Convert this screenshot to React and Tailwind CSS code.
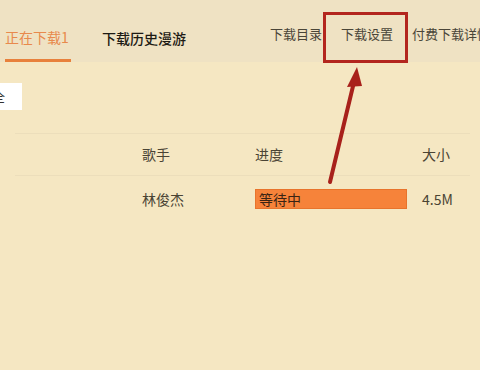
import React from "react";

const font = { fontFamily: '"Noto Sans CJK SC", "Liberation Sans", sans-serif' };

function Annotation() {
  return (
    <>
      <div className="absolute left-[323px] top-[12px] w-[85px] h-[51px] border-[3px] border-[#b3261e]" />
      <svg className="absolute left-0 top-0" width="480" height="370" viewBox="0 0 480 370">
        <line x1="330" y1="182" x2="354" y2="82" stroke="#a8211b" strokeWidth="4" strokeLinecap="round" />
        <polygon points="357,67 347,87 362,86" fill="#a8211b" />
      </svg>
    </>
  );
}

export default function App() {
  return (
    <div className="relative w-[480px] h-[370px] overflow-hidden bg-[#f5e7c2] text-[14px]" style={font}>
      <div className="h-[62px] bg-[#efe2c3] flex items-end whitespace-nowrap">
        <div className="ml-[5px] flex flex-col items-start">
          <span className="text-[#e8894c] leading-[20px]">正在下载1</span>
          <div className="mt-[12px] h-[3px] w-[66px] bg-[#e8813c]" />
        </div>
        <span className="ml-[31px] mb-[14px] text-[#1d1a14] font-medium leading-[20px]">下载历史漫游</span>
        <div className="ml-[84px] mb-[18px] flex gap-[19px] text-[13px] text-[#4a4538] leading-[20px]">
          <span>下载目录</span>
          <span>下载设置</span>
          <span>付费下载详情</span>
        </div>
      </div>

      <div className="mt-[21px] h-[27px] w-[22px] bg-white flex items-center overflow-hidden">
        <span className="-ml-[9px] text-[#333]">全</span>
      </div>

      <div className="mt-[23px] ml-[15px] mr-[10px] h-px bg-[#ecdebb]" />
      <div className="flex h-[41px] items-center text-[#4a4434]">
        <span className="ml-[142px] w-[113px]">歌手</span>
        <span className="w-[167px]">进度</span>
        <span>大小</span>
      </div>
      <div className="ml-[15px] mr-[10px] h-px bg-[#ecdebb]" />
      <div className="flex h-[46px] items-center text-[#4a4434]">
        <span className="ml-[142px] w-[113px]">林俊杰</span>
        <div className="w-[152px] h-[20px] bg-[#f6833a] border border-[#e8742c] flex items-center pl-[3px] text-[#3a2414]">等待中</div>
        <span className="ml-[15px]">4.5M</span>
      </div>

      <Annotation />
    </div>
  );
}
